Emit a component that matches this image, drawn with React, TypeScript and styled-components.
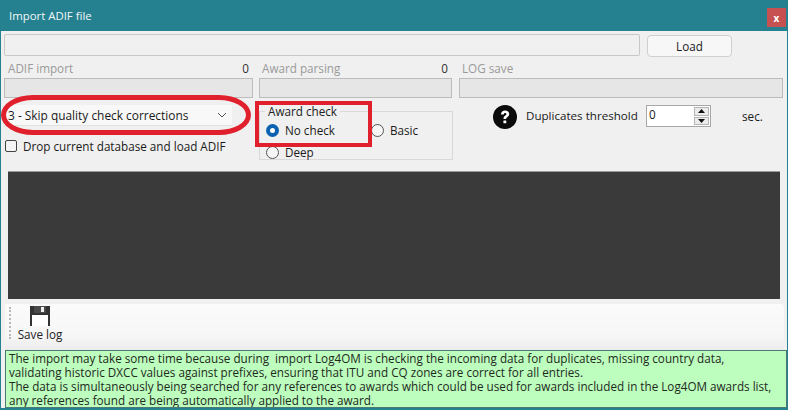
import React from "react";
import styled, { createGlobalStyle } from "styled-components";

const Global = createGlobalStyle`
  html, body { margin: 0; padding: 0; background: #f0f0f0; }
  body { font-family: "Open Sans", "Noto Sans", "Liberation Sans", sans-serif; font-size: 11.7px; color: #1a1a1a; }
`;

const Win = styled.div`
  width: 788px; height: 410px; box-sizing: border-box; position: relative; overflow: hidden;
  background: #f0f0f0; display: flex; flex-direction: column;
  border-left: 1px solid #25808f; border-right: 1px solid #25808f; border-bottom: 2px solid #25808f;
`;
const TitleBar = styled.div`
  height: 31px; flex: none; background: #25808f; color: #f2f8f9; display: flex; align-items: center;
  justify-content: space-between; padding: 0 1px 0 8px; font-size: 11.4px;
`;
const Close = styled.div`
  width: 19px; height: 19px; background: #c75050; color: #fff; font-size: 10px; font-weight: 700;
  display: flex; align-items: center; justify-content: center; margin-top: 4px; line-height: 1;
`;
const Body = styled.div`flex: 1; display: flex; flex-direction: column; padding: 3px 3px 0 3px; min-height: 0;`;
const FileRow = styled.div`display: flex; gap: 7px; height: 22px; align-items: flex-start; padding-right: 52px;`;
const FileInput = styled.div`
  width: 636px; height: 22px; box-sizing: border-box; background: #f0f0f0; border: 1px solid #c8c8c8; border-radius: 2px;
`;
const LoadBtn = styled.div`
  width: 85px; height: 22px; margin-top: 1px; box-sizing: border-box; background: #f7f7f7; border: 1px solid #cfcfcf;
  border-radius: 4px; display: flex; align-items: center; justify-content: center;
`;
const Progress = styled.div`
  display: grid; grid-template-columns: 249px 193px 325px; column-gap: 6px; margin-top: 5px;
  & > div:nth-child(3) { margin-left: 1px; }
`;
const PCol = styled.div`display: flex; flex-direction: column;`;
const PLabels = styled.div<{ $inset?: number }>`
  height: 15px; display: flex; justify-content: space-between; color: #9a9a9a;
  padding: 0 4px 0 ${(p) => p.$inset ?? 3}px; line-height: 15px;
`;
const Count = styled.span`color: #333;`;
const PBar = styled.div`height: 20px; margin-top: 2px; box-sizing: border-box; background: #e6e6e6; border: 1px solid #bcbcbc;`;
const Options = styled.div`
  display: grid; grid-template-columns: 255px 193px auto; column-gap: 0; height: 66px; margin-top: 7px;
`;
const LeftCol = styled.div`display: flex; flex-direction: column; gap: 13px; padding-left: 0;`;
const Combo = styled.div`
  width: 228px; height: 21px; box-sizing: border-box; background: #f8f8f8; display: flex; align-items: center;
  justify-content: space-between; padding: 0 5px 0 4px; border-bottom: 1px solid #e2e2e2; font-size: 11.9px;
`;
const CheckRow = styled.div`display: flex; align-items: center; gap: 6px; padding-left: 1px; height: 14px;`;
const CheckBox = styled.span`
  width: 12px; height: 12px; box-sizing: border-box; border: 1px solid #444; border-radius: 2px; background: #f4f4f4;
`;
const Group = styled.div`
  margin-top: 6px; width: 194px; height: 49px; box-sizing: border-box; border: 1px solid #d9d9d9; position: relative;
  display: flex; flex-direction: column; padding: 11px 0 0 6px; gap: 8px;
`;
const Legend = styled.span`
  position: absolute; top: -8px; left: 5px; background: #f0f0f0; padding: 0 3px 0 3px; line-height: 14px; color: #222;
`;
const RadioRow = styled.div`display: flex; align-items: center; height: 14px;`;
const RadioItem = styled.div<{ $w?: number }>`
  display: flex; align-items: center; gap: 6px; width: ${(p) => (p.$w ? `${p.$w}px` : "auto")};
`;
const Radio = styled.span<{ $on?: boolean }>`
  width: 13px; height: 13px; box-sizing: border-box; border-radius: 50%; background: #f6f6f6;
  border: ${(p) => (p.$on ? "4px solid #0a62b0" : "1px solid #555")};
  ${(p) => p.$on && "background:#fff;"}
`;
const RightCol = styled.div`display: flex; align-items: flex-start; padding-left: 41px;`;
const Help = styled.svg`width: 24px; height: 24px; flex: none;`;
const DupLabel = styled.span`margin-left: 9px; margin-top: 3px; width: 120px; white-space: nowrap; font-size: 11.6px;`;
const Spin = styled.div`
  width: 65px; height: 22px; box-sizing: border-box; border: 1px solid #a8a8a8; background: #fff; display: flex;
  justify-content: space-between; padding: 0 1px 0 2px; line-height: 16px; margin-top: 0;
`;
const SpinBtns = styled.div`display: flex; flex-direction: column; gap: 1px; width: 15px; padding: 1px 0;`;
const SpinBtn = styled.div`
  flex: 1; background: #ececec; border: 1px solid #b5b5b5; box-sizing: border-box; display: flex; align-items: center; justify-content: center;
`;
const Sec = styled.span`margin-left: 31px; margin-top: 3px;`;
const Dark = styled.div`
  height: 128px; flex: none; margin: 5px 4px 0 4px; background: #3a3a3a; border-top: 1px solid #9a9a9a; box-sizing: border-box;
`;
const Toolbar = styled.div`
  height: 46px; flex: none; margin-top: 5px; margin-left: 1px; background: linear-gradient(#fbfbfb, #f6f6f6 70%, #ececec);
  border-radius: 3px 3px 0 0; display: flex; padding-left: 4px;
`;
const Grip = styled.div`width: 0; height: 32px; margin-top: 3px; border-left: 2px dotted #b8b8b8;`;
const ToolBtn = styled.div`
  display: flex; flex-direction: column; align-items: center; margin-left: 6px; width: 46px; padding-top: 2px; color: #222;
`;
const Note = styled.div`
  flex: none; margin: 0 -3px 0 1px; height: 58px; box-sizing: border-box; background: #bdfdbd; border: 1px solid #4c7a72;
  padding: 0 0 0 3px; font-size: 11.7px; line-height: 14px; color: #1d2a1d; white-space: pre; overflow: hidden;
`;
const MarkEllipse = styled.div`
  position: absolute; left: 0; top: 95px; width: 250px; height: 40px; box-sizing: border-box;
  border: 5px solid #e0202c; border-radius: 32px / 50%;
`;
const MarkRect = styled.div`
  position: absolute; left: 254px; top: 101px; width: 117px; height: 46px; box-sizing: border-box; border: 4px solid #e0202c;
`;

export default function App() {
  return (
    <Win>
      <Global />
      <TitleBar>
        <span>Import ADIF file</span>
        <Close>x</Close>
      </TitleBar>
      <Body>
        <FileRow>
          <FileInput />
          <LoadBtn>Load</LoadBtn>
        </FileRow>
        <Progress>
          <PCol>
            <PLabels $inset={4}><span>ADIF import</span><Count>0</Count></PLabels>
            <PBar />
          </PCol>
          <PCol>
            <PLabels><span>Award parsing</span><Count>0</Count></PLabels>
            <PBar />
          </PCol>
          <PCol>
            <PLabels><span>LOG save</span></PLabels>
            <PBar />
          </PCol>
        </Progress>
        <Options>
          <LeftCol>
            <Combo>
              <span>3 - Skip quality check corrections</span>
              <svg width="10" height="6" viewBox="0 0 10 6"><path d="M1 1l4 4 4-4" fill="none" stroke="#555" strokeWidth="1" /></svg>
            </Combo>
            <CheckRow><CheckBox /><span>Drop current database and load ADIF</span></CheckRow>
          </LeftCol>
          <Group>
            <Legend>Award check</Legend>
            <RadioRow>
              <RadioItem $w={105}><Radio $on /><span>No check</span></RadioItem>
              <RadioItem><Radio /><span>Basic</span></RadioItem>
            </RadioRow>
            <RadioRow>
              <RadioItem><Radio /><span>Deep</span></RadioItem>
            </RadioRow>
          </Group>
          <RightCol>
            <Help viewBox="0 0 24 24">
              <circle cx="12" cy="12" r="12" fill="#0b0b0b" />
              <path d="M8 9.4c0-2.4 1.8-3.9 4.1-3.9 2.3 0 4.1 1.4 4.1 3.5 0 1.6-.9 2.4-2 3.2-.8.6-1 .9-1 1.7h-2.7c0-1.6.5-2.3 1.6-3.1.8-.6 1.3-1 1.3-1.7 0-.7-.6-1.2-1.3-1.2-.8 0-1.4.6-1.4 1.5H8z" fill="#fff" />
              <rect x="10.4" y="15.4" width="2.9" height="2.9" rx=".5" fill="#fff" />
            </Help>
            <DupLabel>Duplicates threshold</DupLabel>
            <Spin>
              <span>0</span>
              <SpinBtns>
                <SpinBtn><svg width="7" height="4" viewBox="0 0 7 4"><path d="M3.5 0L7 4H0z" fill="#111" /></svg></SpinBtn>
                <SpinBtn><svg width="7" height="4" viewBox="0 0 7 4"><path d="M0 0h7L3.5 4z" fill="#111" /></svg></SpinBtn>
              </SpinBtns>
            </Spin>
            <Sec>sec.</Sec>
          </RightCol>
        </Options>
        <Dark />
        <Toolbar>
          <Grip />
          <ToolBtn>
            <svg width="20" height="20" viewBox="0 0 20 20">
              <path d="M0 0h20v20h-2V9H2v11H0z" fill="#333" />
              <path d="M2 9h16v11H2z" fill="#fff" />
              <path d="M4 0h12v7H4z" fill="#4a4a4a" />
              <path d="M11 1h3v5h-3z" fill="#f0f0f0" />
            </svg>
            <span>Save log</span>
          </ToolBtn>
        </Toolbar>
        <Note>{`The import may take some time because during  import Log4OM is checking the incoming data for duplicates, missing country data,
validating historic DXCC values against prefixes, ensuring that ITU and CQ zones are correct for all entries.
The data is simultaneously being searched for any references to awards which could be used for awards included in the Log4OM awards list,
any references found are being automatically applied to the award.`}</Note>
      </Body>
      <MarkEllipse />
      <MarkRect />
    </Win>
  );
}
